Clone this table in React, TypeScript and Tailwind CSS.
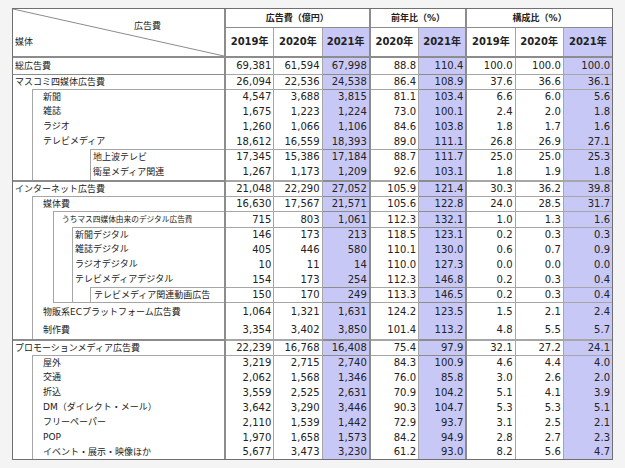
import React from 'react';

type Box = 'A' | 'B' | 'C' | 'D' | 'E' | 'F' | 'G';

// width of the gap in front of each nested box (left edge of the box line)
const spacer: Record<Box, string> = {
  A: 'w-[19px]',
  B: 'w-[57px]',
  C: 'w-[19px]',
  D: 'w-[20px]',
  E: 'w-[18px]',
  F: 'w-[17px]',
  G: 'w-[19px]',
};

type Row = {
  label: string;
  v: string[];
  h: string;
  pad: string;
  chain?: Box[];
  top?: number; // -1 = line over the full row
  bottom?: number;
  thick?: boolean;
  small?: boolean;
};

const rows: Row[] = [
  { label: '総広告費', h: 'h-[16px]', pad: 'pl-[2px]', v: ['69,381', '61,594', '67,998', '88.8', '110.4', '100.0', '100.0', '100.0'] },
  { label: 'マスコミ四媒体広告費', h: 'h-[15px]', pad: 'pl-[2px]', top: -1, v: ['26,094', '22,536', '24,538', '86.4', '108.9', '37.6', '36.6', '36.1'] },
  { label: '新聞', h: 'h-[15px]', pad: 'pl-[10px]', chain: ['A'], top: 0, v: ['4,547', '3,688', '3,815', '81.1', '103.4', '6.6', '6.0', '5.6'] },
  { label: '雑誌', h: 'h-[15px]', pad: 'pl-[10px]', chain: ['A'], v: ['1,675', '1,223', '1,224', '73.0', '100.1', '2.4', '2.0', '1.8'] },
  { label: 'ラジオ', h: 'h-[15px]', pad: 'pl-[10px]', chain: ['A'], v: ['1,260', '1,066', '1,106', '84.6', '103.8', '1.8', '1.7', '1.6'] },
  { label: 'テレビメディア', h: 'h-[15px]', pad: 'pl-[10px]', chain: ['A'], v: ['18,612', '16,559', '18,393', '89.0', '111.1', '26.8', '26.9', '27.1'] },
  { label: '地上波テレビ', h: 'h-[15px]', pad: 'pl-[2px]', chain: ['A', 'B'], top: 1, v: ['17,345', '15,386', '17,184', '88.7', '111.7', '25.0', '25.0', '25.3'] },
  { label: '衛星メディア関連', h: 'h-[16px]', pad: 'pl-[2px]', chain: ['A', 'B'], v: ['1,267', '1,173', '1,209', '92.6', '103.1', '1.8', '1.9', '1.8'] },
  { label: 'インターネット広告費', h: 'h-[16px]', pad: 'pl-[2px]', top: -1, thick: true, v: ['21,048', '22,290', '27,052', '105.9', '121.4', '30.3', '36.2', '39.8'] },
  { label: '媒体費', h: 'h-[15px]', pad: 'pl-[10px]', chain: ['C'], top: 0, v: ['16,630', '17,567', '21,571', '105.6', '122.8', '24.0', '28.5', '31.7'] },
  { label: 'うちマス四媒体由来のデジタル広告費', h: 'h-[16px]', pad: 'pl-[8px]', chain: ['C', 'D'], top: 1, small: true, v: ['715', '803', '1,061', '112.3', '132.1', '1.0', '1.3', '1.6'] },
  { label: '新聞デジタル', h: 'h-[15px]', pad: 'pl-[2px]', chain: ['C', 'D', 'E'], top: 2, v: ['146', '173', '213', '118.5', '123.1', '0.2', '0.3', '0.3'] },
  { label: '雑誌デジタル', h: 'h-[15px]', pad: 'pl-[2px]', chain: ['C', 'D', 'E'], v: ['405', '446', '580', '110.1', '130.0', '0.6', '0.7', '0.9'] },
  { label: 'ラジオデジタル', h: 'h-[15px]', pad: 'pl-[2px]', chain: ['C', 'D', 'E'], v: ['10', '11', '14', '110.0', '127.3', '0.0', '0.0', '0.0'] },
  { label: 'テレビメディアデジタル', h: 'h-[15px]', pad: 'pl-[2px]', chain: ['C', 'D', 'E'], v: ['154', '173', '254', '112.3', '146.8', '0.2', '0.3', '0.4'] },
  { label: 'テレビメディア関連動画広告', h: 'h-[16px]', pad: 'pl-[3px]', chain: ['C', 'D', 'E', 'F'], top: 3, bottom: 1, v: ['150', '170', '249', '113.3', '146.5', '0.2', '0.3', '0.4'] },
  { label: '物販系ECプラットフォーム広告費', h: 'h-[18px]', pad: 'pl-[10px]', chain: ['C'], v: ['1,064', '1,321', '1,631', '124.2', '123.5', '1.5', '2.1', '2.4'] },
  { label: '制作費', h: 'h-[18px]', pad: 'pl-[10px]', chain: ['C'], v: ['3,354', '3,402', '3,850', '101.4', '113.2', '4.8', '5.5', '5.7'] },
  { label: 'プロモーションメディア広告費', h: 'h-[16px]', pad: 'pl-[2px]', top: -1, thick: true, v: ['22,239', '16,768', '16,408', '75.4', '97.9', '32.1', '27.2', '24.1'] },
  { label: '屋外', h: 'h-[15px]', pad: 'pl-[10px]', chain: ['G'], top: 0, v: ['3,219', '2,715', '2,740', '84.3', '100.9', '4.6', '4.4', '4.0'] },
  { label: '交通', h: 'h-[15px]', pad: 'pl-[10px]', chain: ['G'], v: ['2,062', '1,568', '1,346', '76.0', '85.8', '3.0', '2.6', '2.0'] },
  { label: '折込', h: 'h-[15px]', pad: 'pl-[10px]', chain: ['G'], v: ['3,559', '2,525', '2,631', '70.9', '104.2', '5.1', '4.1', '3.9'] },
  { label: 'DM（ダイレクト・メール）', h: 'h-[15px]', pad: 'pl-[10px]', chain: ['G'], v: ['3,642', '3,290', '3,446', '90.3', '104.7', '5.3', '5.3', '5.1'] },
  { label: 'フリーペーパー', h: 'h-[15px]', pad: 'pl-[10px]', chain: ['G'], v: ['2,110', '1,539', '1,442', '72.9', '93.7', '3.1', '2.5', '2.1'] },
  { label: 'POP', h: 'h-[15px]', pad: 'pl-[10px]', chain: ['G'], v: ['1,970', '1,658', '1,573', '84.2', '94.9', '2.8', '2.7', '2.3'] },
  { label: 'イベント・展示・映像ほか', h: 'h-[14px]', pad: 'pl-[10px]', chain: ['G'], v: ['5,677', '3,473', '3,230', '61.2', '93.0', '8.2', '5.6', '4.7'] },
];

const years = ['2019年', '2020年', '2021年', '2020年', '2021年', '2019年', '2020年', '2021年'];

// per column: right border + highlight for 2021
const colCls = [
  'border-r border-[#a6a6a6]',
  'border-r border-[#a6a6a6]',
  'border-r-2 border-[#8c8c8c] bg-[#c8c8f6]',
  'border-r border-[#a6a6a6]',
  'border-r-2 border-[#8c8c8c] bg-[#c8c8f6]',
  'border-r border-[#a6a6a6]',
  'border-r border-[#a6a6a6]',
  'border-[#a6a6a6] bg-[#c8c8f6]',
];

function Nest({ row, i }: { row: Row; i: number }) {
  const chain = row.chain ?? [];
  if (i === chain.length) {
    return (
      <div className={`flex flex-1 items-center whitespace-nowrap ${row.pad} ${row.small ? 'text-[7.7px]' : 'text-[9px]'}`}>
        {row.label}
      </div>
    );
  }
  const b = chain[i];
  return (
    <>
      <div className={`${spacer[b]} shrink-0`} />
      <div
        className={`flex min-w-0 flex-1 border-l border-[#a6a6a6] ${row.top === i ? 'border-t' : ''} ${row.bottom === i ? 'border-b' : ''}`}
      >
        <Nest row={row} i={i + 1} />
      </div>
    </>
  );
}

function DataRow({ row }: { row: Row }) {
  const line = row.top !== undefined ? (row.thick ? 'border-t-2' : 'border-t') : '';
  return (
    <div className={`grid grid-cols-[213px_repeat(8,minmax(0,1fr))] ${row.h}`}>
      <div className={`flex border-r-2 border-[#8c8c8c] ${row.top === -1 ? line : ''}`}>
        <Nest row={row} i={0} />
      </div>
      {row.v.map((v, j) => (
        <div
          key={j}
          className={`flex items-center justify-end pr-[2px] text-[10px] ${colCls[j]} ${line} ${row.bottom !== undefined ? 'border-b' : ''}`}
        >
          {v}
        </div>
      ))}
    </div>
  );
}

export default function App() {
  return (
    <div className="min-h-screen bg-[#f4f4f4] pl-[12px] pt-[8px] text-[#222] font-['DejaVu_Sans','Noto_Sans_CJK_JP',sans-serif] leading-none">
      <div className="w-[601px] border border-[#707070] bg-white">
        {/* header */}
        <div className="grid grid-cols-[213px_repeat(8,minmax(0,1fr))] grid-rows-[19px_28px] border-b-2 border-[#8c8c8c]">
          <div className="relative row-span-2 border-r-2 border-[#8c8c8c] text-[9px]">
            <svg className="absolute inset-0 h-full w-full" viewBox="0 0 100 100" preserveAspectRatio="none">
              <line x1="0" y1="0" x2="100" y2="100" stroke="#8c8c8c" strokeWidth="1" vectorEffect="non-scaling-stroke" />
            </svg>
            <div className="pl-[121px] pt-[13px]">広告費</div>
            <div className="pl-[2px] pt-[7px]">媒体</div>
          </div>
          <div className="col-span-3 flex items-center justify-center border-b border-r-2 border-[#8c8c8c] text-[9px] font-bold">
            広告費（億円）
          </div>
          <div className="col-span-2 flex items-center justify-center border-b border-r-2 border-[#8c8c8c] text-[9px] font-bold">
            前年比（%）
          </div>
          <div className="col-span-3 flex items-center justify-center border-b border-[#8c8c8c] text-[9px] font-bold">
            構成比（%）
          </div>
          {years.map((y, j) => (
            <div key={j} className={`flex items-center justify-center text-[10px] font-bold ${colCls[j]}`}>
              {y}
            </div>
          ))}
        </div>

        {rows.map((r, i) => (
          <DataRow key={i} row={r} />
        ))}
      </div>
    </div>
  );
}
